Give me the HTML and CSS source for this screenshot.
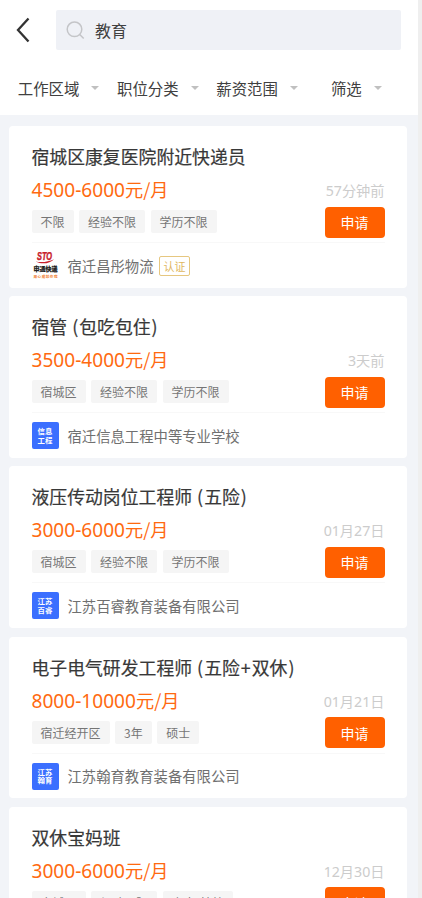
FILE: index.html
```html
<!DOCTYPE html>
<html lang="zh-CN">
<head>
<meta charset="utf-8">
<title>职位搜索</title>
<link rel="stylesheet" href="styles.css">
</head>
<body>
<div class="page">
  <header class="header">
    <div class="search-row">
      <svg class="back" width="14" height="26" viewBox="0 0 14 26"><path d="M12.500 1.500 2 13l10.500 11.500" fill="none" stroke="#333" stroke-width="2.300"/></svg>
      <div class="search">
        <svg width="19" height="19" viewBox="0 0 19 19" fill="none" stroke="#c4c5c8" stroke-width="1.500"><circle cx="8.500" cy="8.300" r="7.300"/><path d="m13.700 13.500 4 4"/></svg>
        <span>教育</span>
      </div>
    </div>
    <nav class="filters">
      <div class="filter">工作区域<i class="caret"></i></div>
      <div class="filter">职位分类<i class="caret"></i></div>
      <div class="filter">薪资范围<i class="caret"></i></div>
      <div class="filter">筛选<i class="caret"></i></div>
    </nav>
  </header>
  <main class="list">
    <article class="card">
      <h2 class="title">宿城区康复医院附近快递员</h2>
      <div class="info">
        <div class="left">
          <div class="salary"><b>4500-6000</b>元/月</div>
          <div class="tags"><span>不限</span><span>经验不限</span><span>学历不限</span></div>
        </div>
        <div class="right"><time><b>57</b>分钟前</time><button>申请</button></div>
      </div>
      <div class="company">
        <svg class="logo" viewBox="0 0 27 27">
          <text x="5" y="8" class="sto" textLength="15" lengthAdjust="spacingAndGlyphs">STO</text>
          <path d="M3.500 9.500c6.500 1.200 13 .3 18.500-2.300-4 4.500-12 5.500-18.500 2.300z" fill="#c8202b"/>
          <text x="1.500" y="19.300" class="sto-name" textLength="24" lengthAdjust="spacingAndGlyphs">申通快递</text>
          <text x="1.500" y="25.600" class="sto-slogan" textLength="24">用心成就你我</text>
        </svg>
        <span class="name">宿迁昌彤物流</span><span class="cert">认证</span>
      </div>
    </article>
    <article class="card">
      <h2 class="title">宿管 <i>(</i>包吃包住<i>)</i></h2>
      <div class="info">
        <div class="left">
          <div class="salary"><b>3500-4000</b>元/月</div>
          <div class="tags"><span>宿城区</span><span>经验不限</span><span>学历不限</span></div>
        </div>
        <div class="right"><time><b>3</b>天前</time><button>申请</button></div>
      </div>
      <div class="company"><div class="logo blue"><span>信息</span><span>工程</span></div><span class="name">宿迁信息工程中等专业学校</span></div>
    </article>
    <article class="card">
      <h2 class="title">液压传动岗位工程师 <i>(</i>五险<i>)</i></h2>
      <div class="info">
        <div class="left">
          <div class="salary"><b>3000-6000</b>元/月</div>
          <div class="tags"><span>宿城区</span><span>经验不限</span><span>学历不限</span></div>
        </div>
        <div class="right"><time><b>01</b>月<b>27</b>日</time><button>申请</button></div>
      </div>
      <div class="company"><div class="logo blue"><span>江苏</span><span>百睿</span></div><span class="name">江苏百睿教育装备有限公司</span></div>
    </article>
    <article class="card">
      <h2 class="title">电子电气研发工程师 <i>(</i>五险<i>+</i>双休<i>)</i></h2>
      <div class="info">
        <div class="left">
          <div class="salary"><b>8000-10000</b>元/月</div>
          <div class="tags"><span>宿迁经开区</span><span>3年</span><span>硕士</span></div>
        </div>
        <div class="right"><time><b>01</b>月<b>21</b>日</time><button>申请</button></div>
      </div>
      <div class="company"><div class="logo blue"><span>江苏</span><span>翰育</span></div><span class="name">江苏翰育教育装备有限公司</span></div>
    </article>
    <article class="card">
      <h2 class="title">双休宝妈班</h2>
      <div class="info">
        <div class="left">
          <div class="salary"><b>3000-6000</b>元/月</div>
          <div class="tags"><span>宿城区</span><span>经验不限</span><span>高中/技校</span></div>
        </div>
        <div class="right"><time><b>12</b>月<b>30</b>日</time><button>申请</button></div>
      </div>
    </article>
  </main>
</div>
</body>
</html>
```

FILE: styles.css
```css
* { box-sizing: border-box; }
html, body { margin: 0; height: 898px; overflow: hidden; }
body {
  background: #efefef;
  color: #404040;
  font-family: "Noto Sans CJK SC", sans-serif;
}
.page { width: 418px; height: 898px; overflow: hidden; background: #f2f4f8; }
.header { height: 115px; padding-top: 10px; background: #fff; }
.search-row { display: flex; align-items: center; height: 40px; padding: 0 17px 0 16px; }
.back { margin-right: 26px; }
.search {
  display: flex; flex: 1; align-items: center; gap: 10px;
  height: 40px; padding-left: 10px;
  background: #eff1f6; border-radius: 2px;
  font-size: 16px; line-height: 40px;
}
.filters {
  display: grid; grid-template-columns: repeat(4, 1fr);
  margin: 25px 12px 0 9px;
  font-size: 15.400px; line-height: 26px;
}
.filter { display: flex; align-items: center; justify-content: center; gap: 12px; }
.caret { border: 4px solid transparent; border-top-color: #c0c0c0; border-bottom: 0; }
.list { display: flex; flex-direction: column; gap: 8.700px; padding: 11px 11px 0 9px; }
.card { flex: none; height: 161.500px; padding: 17px 22.500px 0; background: #fff; border-radius: 4px; }
.title {
  margin: 0; color: #383838; font-size: 17.850px; font-weight: 400; line-height: 26px;
  white-space: nowrap; -webkit-text-stroke: .2px #383838;
}
.title i { padding: 0 1px; font-style: normal; }
b { font-family: "Noto Sans", sans-serif; font-weight: 400; }
.info { display: flex; justify-content: space-between; height: 74px; border-bottom: 1px solid #f8f8f8; }
.salary { margin-top: 7px; height: 26px; color: #ff6a10; font-size: 18.200px; line-height: 26px; white-space: nowrap; }
.salary b { font-size: 19.100px; line-height: 1; }
.tags { display: flex; gap: 5.500px; margin-top: 8px; }
.tags span {
  height: 23px; padding: 0 9px; background: #f5f5f5; border-radius: 2px;
  color: #757575; font-size: 12px; line-height: 23px; white-space: nowrap;
}
.right { display: flex; flex-direction: column; align-items: flex-end; }
time { margin-top: 10px; height: 22px; color: #ccc; font-size: 14.200px; line-height: 22px; }
button {
  width: 60px; height: 31px; margin: 5.600px 0 0; padding: 0;
  border: 0; border-radius: 4px; background: #ff6000;
  color: #fff; font: 14px/30px "Noto Sans CJK SC", sans-serif;
}
.company { display: flex; align-items: center; height: 44px; padding-top: 1px; }
.logo { flex: none; width: 27px; height: 27px; margin-right: 9px; border-radius: 2px; }
.blue {
  display: flex; flex-direction: column; align-items: center; justify-content: center;
  background: #3b6fff; color: #fff; font-size: 7.400px; font-weight: 700; line-height: 8.500px;
}
.sto { fill: #c8202b; stroke: #c8202b; stroke-width: .4px; font: italic 700 10px "Liberation Sans", sans-serif; }
.sto-name { fill: #222; stroke: #222; stroke-width: .2px; font-size: 6.200px; font-weight: 900; }
.sto-slogan { fill: #f08030; font-size: 3.600px; font-weight: 700; }
.name { color: #707070; font-size: 14.350px; line-height: 22px; white-space: nowrap; }
.cert {
  width: 31px; height: 20px; margin-left: 5.500px;
  border: 1px solid #e6c780; border-radius: 2px;
  color: #dfb761; font-size: 11px; line-height: 18px; text-align: center;
}
```
